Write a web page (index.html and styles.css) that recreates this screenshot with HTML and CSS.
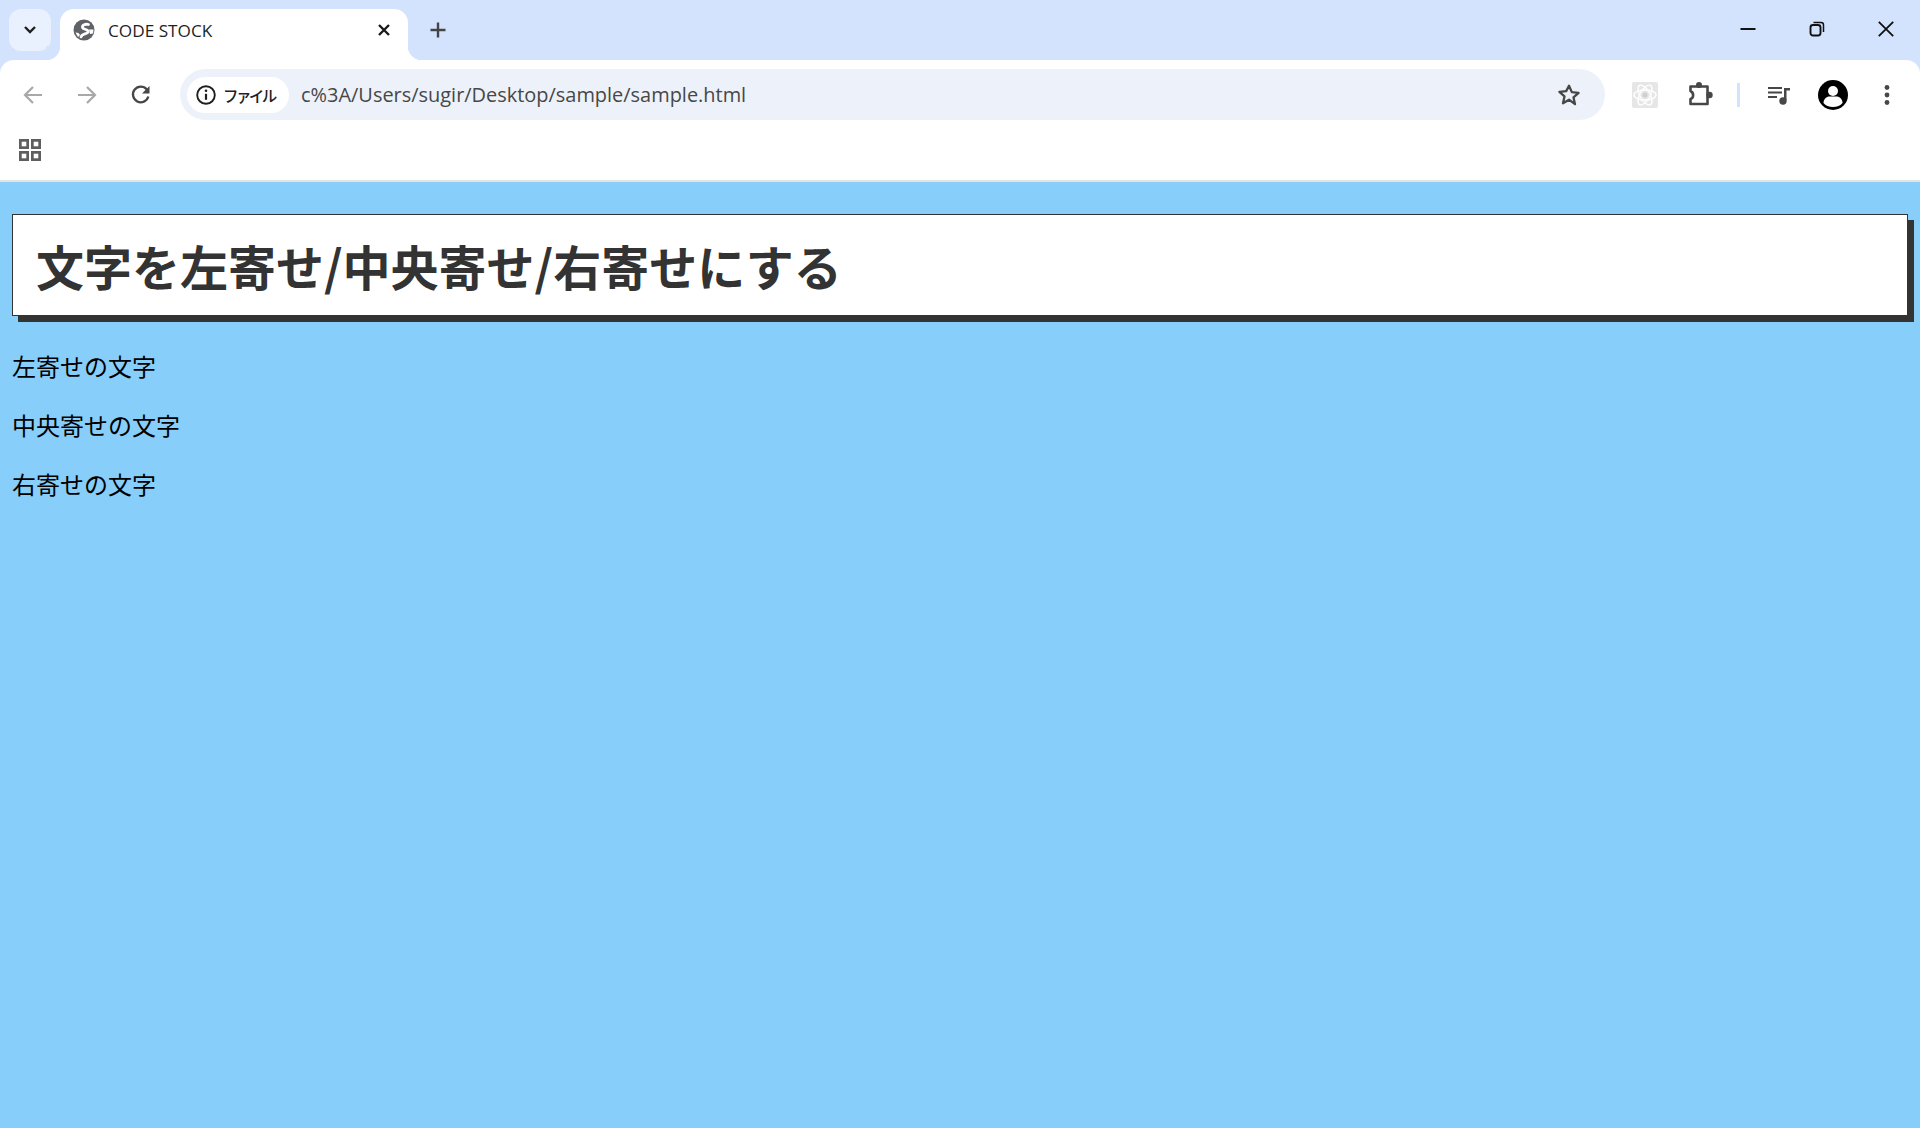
FILE: index.html
```html
<!DOCTYPE html>
<html lang="ja">

<head>
    <meta charset="UTF-8">
    <title>CODE STOCK</title>
    <link rel="stylesheet" href="styles.css">
</head>

<body>
    <div class="browser">
        <div class="tabstrip">
            <button class="tab-search">
                <svg width="16" height="16" viewBox="0 0 16 16"><path d="M3 5 8 10l5-5" fill="none" stroke="#1f1f1f" stroke-width="2.400"/></svg>
            </button>
            <div class="tab">
                <svg class="favicon" width="22" height="22" viewBox="0 0 22 22">
                    <circle cx="11" cy="11" r="10.500" fill="#5f6368"/>
                    <path d="M15.500 5.500c-3-.8-6.500.5-6 3 .4 2 4.500 1.500 5.500 3.500.8 1.800-2 2.500-3.500 3-1.500.5-3 1-3.500 3" fill="none" stroke="#fff" stroke-width="2.800" stroke-linecap="round"/>
                    <path d="M16 10.500l4.500 0-.5 4-3 .5z" fill="#fff"/>
                    <path d="M2.500 13.500l3 .5 1.500 2-2 2z" fill="#fff"/>
                </svg>
                <span class="tab-title">CODE STOCK</span>
                <svg class="tab-close" width="14" height="14" viewBox="0 0 14 14"><path d="M2 2l10 10M12 2 2 12" stroke="#1a1a1a" stroke-width="2.400"/></svg>
            </div>
            <svg class="new-tab" width="18" height="18" viewBox="0 0 18 18"><path d="M9 1.500v15M1.500 9h15" stroke="#444" stroke-width="2.400"/></svg>
            <div class="window-controls">
                <svg width="16" height="16" viewBox="0 0 16 16"><path d="M.5 8h15" stroke="#111" stroke-width="2"/></svg>
                <svg width="16" height="16" viewBox="0 0 16 16"><rect x="1.500" y="4" width="10" height="10.500" rx="2.500" fill="none" stroke="#111" stroke-width="1.900"/><path d="M4.500 1.500h7.500a2.500 2.500 0 0 1 2.500 2.500v7" fill="none" stroke="#111" stroke-width="1.500"/></svg>
                <svg width="16" height="16" viewBox="0 0 16 16"><path d="M.8.800l14.400 14.400M15.200.800.800 15.200" stroke="#111" stroke-width="1.800"/></svg>
            </div>
        </div>

        <div class="toolbar">
            <div class="nav-buttons">
                <svg width="20" height="20" viewBox="0 0 20 20"><path d="M19 10H2M10 2l-8 8 8 8" fill="none" stroke="#a8a8a8" stroke-width="2.200"/></svg>
                <svg width="20" height="20" viewBox="0 0 20 20"><path d="M1 10h17M10 2l8 8-8 8" fill="none" stroke="#a8a8a8" stroke-width="2.200"/></svg>
                <svg width="20" height="20" viewBox="0 0 20 20"><path d="M17.300 11.500A7.800 7.800 0 1 1 15.800 4.500" fill="none" stroke="#474747" stroke-width="2.300"/><path d="M18.500 1v7.500H11z" fill="#474747"/></svg>
            </div>
            <div class="omnibox">
                <div class="chip">
                    <svg width="20" height="20" viewBox="0 0 20 20"><circle cx="10" cy="10" r="8.800" fill="none" stroke="#1f1f1f" stroke-width="1.900"/><path d="M10 8.800v6" stroke="#1f1f1f" stroke-width="2.200"/><circle cx="10" cy="5.800" r="1.300" fill="#1f1f1f"/></svg>
                    <span class="chip-label">ファイル</span>
                </div>
                <span class="url">c%3A/Users/sugir/Desktop/sample/sample.html</span>
                <svg class="star" width="24" height="24" viewBox="0 0 24 24"><path d="M12 2.800l2.800 6.300 6.800.7-5.100 4.600 1.500 6.800L12 16.700l-6 3.500 1.500-6.800-5.100-4.600 6.800-.7z" fill="none" stroke="#474747" stroke-width="2.300" stroke-linejoin="round"/></svg>
            </div>
            <div class="actions">
                <svg class="ext-atom" width="26" height="26" viewBox="0 0 26 26">
                    <rect width="26" height="26" rx="2" fill="#e6e6e6"/>
                    <g fill="none" stroke="#fff" stroke-width="1.400">
                        <ellipse cx="13" cy="13" rx="11" ry="5"/>
                        <ellipse cx="13" cy="13" rx="11" ry="5" transform="rotate(60 13 13)"/>
                        <ellipse cx="13" cy="13" rx="11" ry="5" transform="rotate(120 13 13)"/>
                    </g>
                    <circle cx="13" cy="13" r="2.500" fill="#cfcfcf"/>
                </svg>
                <svg class="ext-puzzle" width="26" height="26" viewBox="0 0 26 26">
                    <path d="M2.500 4.500h17v17.500h-17v-5c3.500-1 3.500-6.500 0-8z" fill="none" stroke="#474747" stroke-width="2.600" stroke-linejoin="round"/>
                    <circle cx="11" cy="3" r="3" fill="#474747"/>
                    <circle cx="21.500" cy="13" r="3.200" fill="#474747"/>
                </svg>
                <span class="divider"></span>
                <svg class="media" width="24" height="24" viewBox="0 0 24 24"><path d="M1 5h14M1 9.500h14M1 14h9" stroke="#474747" stroke-width="2.100"/><path d="M17 5h6v2.500h-3.500V17h-2.500z" fill="#474747"/><circle cx="16" cy="18" r="3.700" fill="#474747"/></svg>
                <svg class="avatar" width="30" height="30" viewBox="0 0 30 30"><circle cx="15" cy="15" r="15" fill="#000"/><circle cx="15" cy="11" r="5" fill="#fff"/><path d="M5.500 23c0-4 3-6.500 6-6.500h7c3 0 6 2.500 6 6.500-2 2.500-5.500 4-9.500 4s-7.500-1.500-9.500-4z" fill="#fff"/></svg>
                <svg class="menu" width="6" height="22" viewBox="0 0 6 22"><circle cx="3" cy="3.500" r="2.400" fill="#474747"/><circle cx="3" cy="11" r="2.400" fill="#474747"/><circle cx="3" cy="18.500" r="2.400" fill="#474747"/></svg>
            </div>
        </div>

        <div class="bookmarks">
            <svg width="22" height="22" viewBox="0 0 22 22"><g fill="none" stroke="#5f5f5f" stroke-width="2.700"><rect x="1.350" y="1.350" width="7.300" height="7.300"/><rect x="13.350" y="1.350" width="7.300" height="7.300"/><rect x="1.350" y="13.350" width="7.300" height="7.300"/><rect x="13.350" y="13.350" width="7.300" height="7.300"/></g></svg>
        </div>
    </div>

    <main class="page">
        <h1 class="page-title">文字を左寄せ/中央寄せ/右寄せにする</h1>
        <p>左寄せの文字</p>
        <p>中央寄せの文字</p>
        <p>右寄せの文字</p>
    </main>
</body>

</html>
```

FILE: styles.css
```css
* {
    box-sizing: border-box;
}

html,
body {
    height: 100%;
}

body {
    margin: 0;
    display: flex;
    flex-direction: column;
    overflow: hidden;
    background-color: #87cefa;
    font-family: "Noto Sans CJK JP", sans-serif;
}

svg {
    display: block;
    flex: none;
}

/* browser frame */
.browser {
    background-color: #d3e3fd;
}

.tabstrip {
    height: 60px;
    display: flex;
    align-items: flex-start;
    padding-top: 9px;
    padding-left: 9px;
}

.tab-search {
    width: 42px;
    height: 42px;
    padding: 0;
    border: none;
    border-radius: 12px;
    background-color: #e9f0fe;
    display: flex;
    align-items: center;
    justify-content: center;
}

.tab {
    position: relative;
    width: 348px;
    height: 51px;
    margin-left: 9px;
    padding: 0 17px 9px 13px;
    background-color: #fff;
    border-radius: 14px 14px 0 0;
    display: flex;
    align-items: center;
}

.tab::before,
.tab::after {
    content: "";
    position: absolute;
    bottom: 0;
    width: 14px;
    height: 14px;
}

.tab::before {
    left: -14px;
    background: radial-gradient(circle at 0 0, #d3e3fd 14px, #fff 14.500px);
}

.tab::after {
    right: -14px;
    background: radial-gradient(circle at 100% 0, #d3e3fd 14px, #fff 14.500px);
}

.tab-title {
    margin-left: 13px;
    flex: 1;
    font-family: "Open Sans", sans-serif;
    font-size: 17.200px;
    color: #1f1f1f;
}

.new-tab {
    margin-left: 21px;
    margin-top: 12px;
}

.window-controls {
    margin-left: auto;
    margin-top: 12px;
    padding-right: 26px;
    display: flex;
    gap: 53px;
}

.toolbar {
    height: 60px;
    background-color: #fff;
    border-radius: 14px 14px 0 0;
    display: flex;
    align-items: center;
    padding-top: 9px;
}

.nav-buttons {
    width: 180px;
    padding-left: 23px;
    display: flex;
    gap: 34px;
}

.omnibox {
    width: 1425px;
    height: 51px;
    padding: 0 24px 0 7px;
    background-color: #edf2fa;
    border-radius: 26px;
    display: flex;
    align-items: center;
}

.chip {
    width: 102px;
    height: 36px;
    padding-left: 9px;
    background-color: #fff;
    border-radius: 18px;
    display: flex;
    align-items: center;
    gap: 7px;
}

.chip-label {
    font-size: 15.500px;
    font-weight: 500;
    letter-spacing: -2.600px;
    color: #1f1f1f;
}

.url {
    margin-left: 12px;
    flex: 1;
    font-family: "Open Sans", sans-serif;
    font-size: 19.950px;
    color: #474747;
}

.actions {
    flex: 1;
    display: flex;
    align-items: center;
}

.ext-atom {
    margin-left: 27px;
}

.ext-puzzle {
    margin-left: 30px;
}

.divider {
    width: 3px;
    height: 24px;
    margin-left: 23px;
    background-color: #d3e3fd;
}

.media {
    margin-left: 27px;
}

.avatar {
    margin-left: 27px;
}

.menu {
    margin-left: 36px;
}

.bookmarks {
    height: 62px;
    background-color: #fff;
    border-bottom: 2px solid #e3e3e3;
    padding: 19px 0 0 19px;
}

/* page content */
.page {
    flex: 1;
    padding: 32px 12px 0;
}

.page-title {
    margin: 0 0 32px;
    width: 1896px;
    height: 102px;
    padding-left: 23px;
    border: 1px solid #333;
    background-color: #fff;
    box-shadow: 6px 6px 0 #333;
    color: #333;
    font-size: 48px;
    font-weight: 700;
    line-height: 100px;
}

.page p {
    margin: 0 0 24px;
    font-size: 24px;
    line-height: 35px;
    color: #000;
}
```
